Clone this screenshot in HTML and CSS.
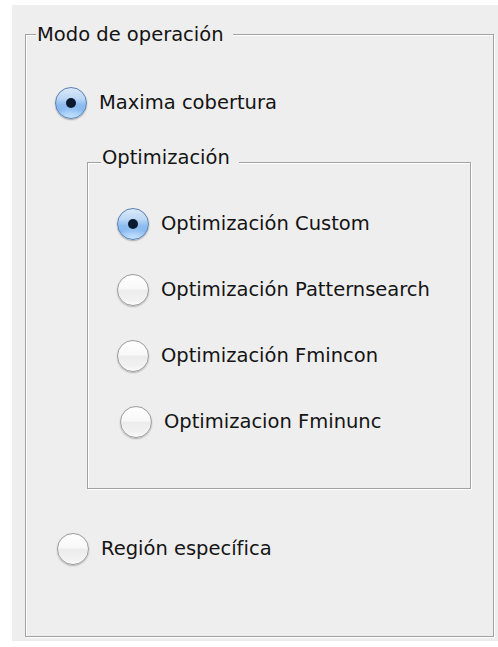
FILE: index.html
```html
<!DOCTYPE html>
<html lang="es">
<head>
<meta charset="utf-8">
<title>Modo de operación</title>
<link rel="stylesheet" href="styles.css">
</head>
<body>
<div class="panel">
  <section class="group group--outer">
    <span class="group-title group-title--outer">Modo de operación</span>

    <label class="option option--top">
      <input type="radio" name="modo" class="radio" checked>
      <span class="option-text">Maxima cobertura</span>
    </label>

    <section class="group group--inner">
      <span class="group-title group-title--inner">Optimización</span>

      <label class="option option--first">
        <input type="radio" name="opt" class="radio" checked>
        <span class="option-text">Optimización Custom</span>
      </label>
      <label class="option">
        <input type="radio" name="opt" class="radio">
        <span class="option-text">Optimización Patternsearch</span>
      </label>
      <label class="option">
        <input type="radio" name="opt" class="radio">
        <span class="option-text">Optimización Fmincon</span>
      </label>
      <label class="option option--nudge">
        <input type="radio" name="opt" class="radio">
        <span class="option-text">Optimizacion Fminunc</span>
      </label>
    </section>

    <label class="option option--region">
      <input type="radio" name="modo" class="radio">
      <span class="option-text">Región específica</span>
    </label>
  </section>
</div>
</body>
</html>
```

FILE: styles.css
```css
html, body {
  margin: 0;
  padding: 0;
  background: #ffffff;
}

body {
  font-family: "DejaVu Sans", "Liberation Sans", sans-serif;
  font-size: 19.5px;
  color: #141414;
}

.panel {
  margin: 5px 0 0 12px;
  width: 486px;
  height: 636px;
  background: #eeeeee;
  padding: 29px 0 0 13px;
  box-sizing: border-box;
}

/* etched frame: grey line with a white highlight offset by one pixel */
.group {
  position: relative;
  border: 1px solid #a2a2a2;
  box-shadow: inset 1px 1px 0 #ffffff, 1px 1px 0 #ffffff;
  box-sizing: border-box;
  display: flex;
  flex-direction: column;
  align-items: flex-start;
}

.group--outer {
  width: 469px;
  height: 603px;
}

.group--inner {
  width: 384px;
  margin: 43px 0 0 61px;
  padding-bottom: 50px;
}

.group-title {
  position: absolute;
  line-height: 24px;
  background: #eeeeee;
  padding: 0 9px 0 1px;
  white-space: nowrap;
}

.group-title--outer {
  top: -12px;
  left: 10px;
}

.group-title--inner {
  top: -17px;
  left: 13px;
}

.option {
  display: flex;
  align-items: center;
  gap: 12px;
  height: 32px;
  margin-left: 29px;
  margin-top: 34px;
  white-space: nowrap;
}

.option--top {
  margin-top: 52px;
}

.option--first {
  margin-top: 45px;
}

.option--nudge {
  margin-left: 32px;
}

.option--region {
  margin-top: 44px;
  margin-left: 31px;
}

.option-text {
  line-height: 24px;
}

/* Aqua-style radio button */
.radio {
  -webkit-appearance: none;
  appearance: none;
  margin: 0;
  width: 32px;
  height: 32px;
  flex: none;
  border-radius: 50%;
  border: 1px solid #9c9c9c;
  background: linear-gradient(#ffffff 0%, #f8f8f8 45%, #ececec 52%, #f2f2f2 85%, #fafafa 100%);
  box-shadow: 0 1px 1.5px rgba(0, 0, 0, 0.25), inset 0 -1px 1px rgba(255, 255, 255, 0.8);
  box-sizing: border-box;
  position: relative;
}

.radio:checked {
  border-color: #5b82b4;
  background:
    radial-gradient(ellipse 80% 55% at 50% 100%, rgba(200, 228, 255, 0.9), rgba(200, 228, 255, 0) 70%),
    linear-gradient(#dbe9f9 0%, #bcd7f5 35%, #8fbdf0 55%, #86b8ef 75%, #a9d0f7 100%);
  box-shadow: 0 1px 1.5px rgba(0, 0, 0, 0.3);
}

.radio:checked::after {
  content: "";
  position: absolute;
  left: 50%;
  top: 50%;
  width: 10px;
  height: 10px;
  margin: -5px 0 0 -5px;
  border-radius: 50%;
  background: #0b1a2e;
}
```
